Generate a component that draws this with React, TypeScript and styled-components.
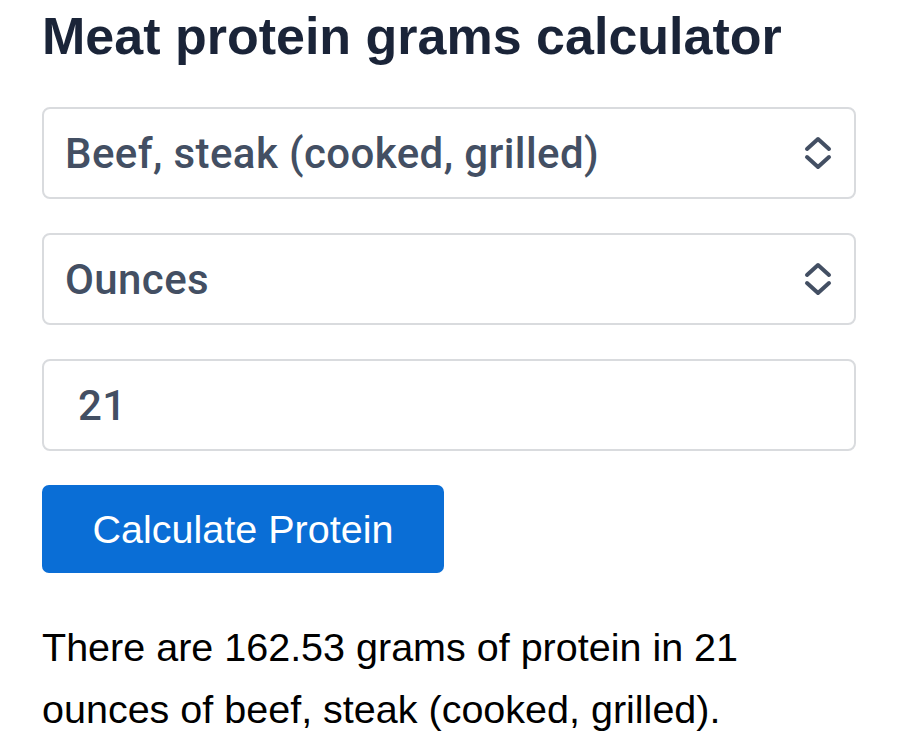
import React, { useState } from "react";
import styled, { createGlobalStyle } from "styled-components";

const Global = createGlobalStyle`
  html, body { margin: 0; padding: 0; background: #ffffff; }
  body { font-family: "Liberation Sans", Arial, sans-serif; }
`;

const Page = styled.main`
  width: 814px;
  padding: 0 0 0 42px;
  display: flex;
  flex-direction: column;
`;

const Title = styled.h1`
  margin: 4px 0 0 0;
  font-size: 52px;
  line-height: 64px;
  font-weight: 700;
  color: #1a2438;
`;

const Form = styled.div`
  margin-top: 39px;
  display: flex;
  flex-direction: column;
  gap: 34px;
`;

const Field = styled.div`
  height: 92px;
  box-sizing: border-box;
  border: 2px solid #d9dbde;
  border-radius: 8px;
  background: #fff;
  display: flex;
  align-items: center;
  padding: 0 22px 0 21px;
  color: #434f63;
  font-family: Roboto, "Liberation Sans", Arial, sans-serif;
  font-weight: 500;
  font-size: 42px;
  letter-spacing: 0.4px;
`;

const FieldText = styled.span<{ $pad?: number }>`
  flex: 1;
  padding-left: ${(p) => p.$pad ?? 0}px;
`;

const Chevrons = () => (
  <svg width="28" height="36" viewBox="0 0 28 36" fill="none" stroke="#434f63" strokeWidth="4" strokeLinecap="round" strokeLinejoin="round">
    <path d="M3 14 L14 4 L25 14" />
    <path d="M3 22 L14 32 L25 22" />
  </svg>
);

const Button = styled.button`
  margin-top: 34px;
  align-self: flex-start;
  width: 402px;
  height: 88px;
  border: none;
  border-radius: 7px;
  background: #0a6ed6;
  color: #ffffff;
  font-family: "Liberation Sans", Arial, sans-serif;
  font-size: 39.5px;
  padding: 0;
`;

const Result = styled.p`
  margin: 43px 0 0 0;
  font-size: 39.5px;
  line-height: 62px;
  color: #000;
  width: 800px;
`;

export default function App() {
  const [amount] = useState("21");
  return (
    <>
      <Global />
      <Page>
        <Title>Meat protein grams calculator</Title>
        <Form>
          <Field>
            <FieldText>Beef, steak (cooked, grilled)</FieldText>
            <Chevrons />
          </Field>
          <Field>
            <FieldText>Ounces</FieldText>
            <Chevrons />
          </Field>
          <Field>
            <FieldText $pad={13}>{amount}</FieldText>
          </Field>
        </Form>
        <Button>Calculate Protein</Button>
        <Result>
          There are 162.53 grams of protein in 21
          <br />
          ounces of beef, steak (cooked, grilled).
        </Result>
      </Page>
    </>
  );
}
